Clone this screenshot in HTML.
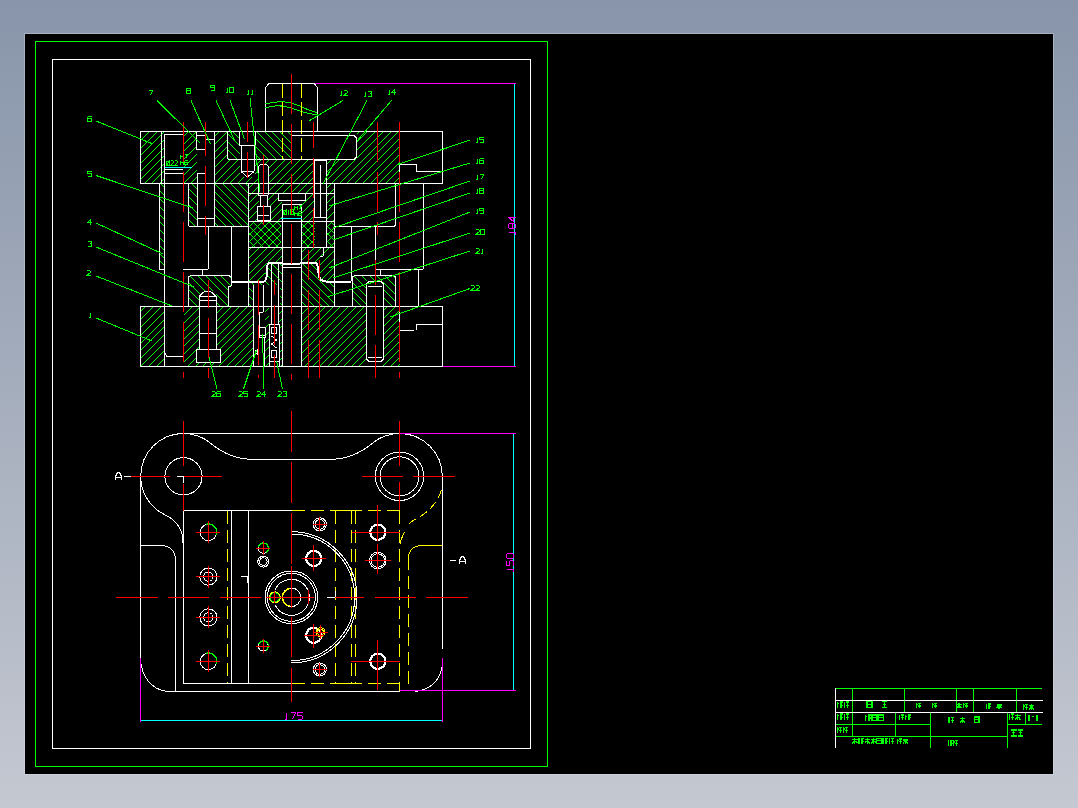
<!DOCTYPE html>
<html><head><meta charset="utf-8">
<style>
html,body{margin:0;padding:0;width:1078px;height:808px;overflow:hidden;}
body{background:linear-gradient(to bottom,#8895aa 0%,#c4c8d1 100%);position:relative;font-family:"Liberation Sans",sans-serif;}
#cad{position:absolute;left:25px;top:34px;width:1028px;height:740px;background:#000;box-shadow:0 0 0 1px rgba(220,225,235,0.35);}
svg{position:absolute;left:0;top:0;}
text{font-family:"Liberation Sans",sans-serif;}
</style></head><body>
<div id="cad"></div>
<svg width="1078" height="808" viewBox="0 0 1078 808" fill="none" stroke-width="1" shape-rendering="crispEdges">
<defs>
<pattern id="hs" shape-rendering="crispEdges" patternUnits="userSpaceOnUse" width="7.8" height="7.8"><path d="M-1,8.8 L8.8,-1 M-1,1 L1,-1 M6.8,8.8 L8.8,6.8" stroke="#00ff00" stroke-width="1"/></pattern>
<pattern id="hb" shape-rendering="crispEdges" patternUnits="userSpaceOnUse" width="7.8" height="7.8"><path d="M-1,-1 L8.8,8.8 M6.8,-1 L8.8,1 M-1,6.8 L1,8.8" stroke="#00ff00" stroke-width="1"/></pattern>
<pattern id="hx" shape-rendering="crispEdges" patternUnits="userSpaceOnUse" width="7.8" height="7.8"><path d="M-1,8.8 L8.8,-1 M-1,1 L1,-1 M6.8,8.8 L8.8,6.8 M-1,-1 L8.8,8.8 M6.8,-1 L8.8,1 M-1,6.8 L1,8.8" stroke="#00ff00" stroke-width="1"/></pattern>
</defs>
<g shape-rendering="crispEdges"><rect x="35.5" y="41.5" width="512" height="725" stroke="#00ff00" fill="none" rx="0" stroke-width="1"/><rect x="52.5" y="59.5" width="478" height="689" stroke="#ffffff" fill="none" rx="0" stroke-width="1"/></g><g shape-rendering="crispEdges"><line x1="835" y1="688.5" x2="1042" y2="688.5" stroke="#00ff00" stroke-width="1"/><line x1="852.5" y1="688" x2="852.5" y2="737" stroke="#00ff00" stroke-width="1"/><line x1="904.5" y1="688" x2="904.5" y2="712" stroke="#00ff00" stroke-width="1"/><line x1="956.5" y1="688" x2="956.5" y2="712" stroke="#00ff00" stroke-width="1"/><line x1="973.5" y1="688" x2="973.5" y2="712" stroke="#00ff00" stroke-width="1"/><line x1="1016.5" y1="688" x2="1016.5" y2="712" stroke="#00ff00" stroke-width="1"/><line x1="895.5" y1="712" x2="895.5" y2="737" stroke="#00ff00" stroke-width="1"/><line x1="930.5" y1="712" x2="930.5" y2="748" stroke="#00ff00" stroke-width="1"/><line x1="1007.5" y1="712" x2="1007.5" y2="748" stroke="#00ff00" stroke-width="1"/><line x1="1025.5" y1="712" x2="1025.5" y2="724" stroke="#00ff00" stroke-width="1"/><line x1="835" y1="724.5" x2="930" y2="724.5" stroke="#00ff00" stroke-width="1"/><line x1="1007" y1="724.5" x2="1042" y2="724.5" stroke="#00ff00" stroke-width="1"/><line x1="835" y1="736.5" x2="1007" y2="736.5" stroke="#00ff00" stroke-width="1"/><line x1="835.5" y1="688" x2="835.5" y2="748" stroke="#ffffff" stroke-width="1"/><line x1="835" y1="700.5" x2="1043" y2="700.5" stroke="#ffffff" stroke-width="1"/><line x1="835" y1="712.5" x2="1043" y2="712.5" stroke="#ffffff" stroke-width="1"/></g><path d="M837.0,703.8 H838.6 M837.8,701.5 V708.0 M839.5,702.0 H842.5 M840.9,701.5 V708.0 M839.5,705.4 H842.5 M843.5,703.8 H845.1 M844.3,701.5 V708.0 M846.0,702.0 H849.0 M847.4,701.5 V708.0 M846.0,705.4 H849.0" stroke="#00ff00" stroke-width="1.3" fill="none"/><path d="M867.0,701.5 H872.0 V707.5 H867.0 Z M867.0,704.2 H872.0" stroke="#00ff00" stroke-width="1.3" fill="none"/><path d="M881.5,701.5 H887.0 M882.6,704.2 H885.9 M881.5,707.5 H887.0 M884.2,701.0 V707.5" stroke="#00ff00" stroke-width="1.3" fill="none"/><path d="M916.0,704.8 H917.5 M916.8,703.0 V708.0 M918.2,703.5 H921.0 M919.5,703.0 V708.0 M918.2,706.0 H921.0" stroke="#00ff00" stroke-width="1.3" fill="none"/><path d="M932.0,704.8 H933.5 M932.8,703.0 V708.0 M934.2,703.5 H937.0 M935.5,703.0 V708.0 M934.2,706.0 H937.0" stroke="#00ff00" stroke-width="1.3" fill="none"/><path d="M956.5,704.5 H961.5 M959.0,703.0 V708.0 M956.5,708.0 L958.5,705.5 M961.5,708.0 L959.5,705.5" stroke="#00ff00" stroke-width="1.3" fill="none"/><path d="M963.0,704.8 H964.5 M963.8,703.0 V708.0 M965.2,703.5 H968.0 M966.5,703.0 V708.0 M965.2,706.0 H968.0" stroke="#00ff00" stroke-width="1.3" fill="none"/><path d="M985.5,705.2 H987.0 M986.2,703.5 V708.5 M987.8,704.0 H990.5 M989.0,703.5 V708.5 M987.8,706.5 H990.5" stroke="#00ff00" stroke-width="1.3" fill="none"/><path d="M996.5,705.0 H1001.5 M999.0,703.5 V708.5 M996.5,708.5 L998.5,706.0 M1001.5,708.5 L999.5,706.0" stroke="#00ff00" stroke-width="1.3" fill="none"/><path d="M1023.0,705.9 H1024.5 M1023.8,704.0 V709.5 M1025.2,704.5 H1028.0 M1026.5,704.0 V709.5 M1025.2,707.3 H1028.0 M1029.0,705.6 H1034.0 M1031.5,704.0 V709.5 M1029.0,709.5 L1031.0,706.8 M1034.0,709.5 L1032.0,706.8" stroke="#00ff00" stroke-width="1.3" fill="none"/><path d="M837.0,715.8 H838.6 M837.8,713.5 V720.0 M839.5,714.0 H842.5 M840.9,713.5 V720.0 M839.5,717.4 H842.5 M843.5,715.8 H845.1 M844.3,713.5 V720.0 M846.0,714.0 H849.0 M847.4,713.5 V720.0 M846.0,717.4 H849.0" stroke="#00ff00" stroke-width="1.3" fill="none"/><path d="M865.0,716.6 H866.6 M865.8,714.5 V720.5 M867.5,715.0 H870.5 M868.9,714.5 V720.5 M867.5,718.1 H870.5 M872.0,715.0 H877.0 V720.5 H872.0 Z M872.0,717.5 H877.0 M878.5,715.0 H883.5 V720.5 H878.5 Z M878.5,717.5 H883.5" stroke="#00ff00" stroke-width="1.3" fill="none"/><path d="M898.5,716.4 H900.1 M899.3,714.5 V720.0 M901.0,715.0 H904.0 M902.4,714.5 V720.0 M901.0,717.8 H904.0 M905.0,716.4 H906.6 M905.8,714.5 V720.0 M907.5,715.0 H910.5 M908.9,714.5 V720.0 M907.5,717.8 H910.5" stroke="#00ff00" stroke-width="1.3" fill="none"/><path d="M948.0,719.1 H949.8 M948.9,717.0 V723.0 M950.7,717.5 H954.0 M952.2,717.0 V723.0 M950.7,720.6 H954.0" stroke="#00ff00" stroke-width="1.3" fill="none"/><path d="M960.0,718.8 H965.0 M962.5,717.0 V723.0 M960.0,723.0 L962.0,720.0 M965.0,723.0 L963.0,720.0" stroke="#00ff00" stroke-width="1.3" fill="none"/><path d="M974.5,717.0 H979.0 V722.5 H974.5 Z M974.5,719.5 H979.0" stroke="#00ff00" stroke-width="1.3" fill="none"/><path d="M1008.5,715.8 H1010.1 M1009.3,713.5 V720.0 M1011.0,714.0 H1014.0 M1012.4,713.5 V720.0 M1011.0,717.4 H1014.0 M1015.0,715.5 H1020.5 M1017.8,713.5 V720.0 M1015.0,720.0 L1017.2,716.8 M1020.5,720.0 L1018.3,716.8" stroke="#00ff00" stroke-width="1.3" fill="none"/><path d="M1029,715 V720.5 M1028,720.5 H1030 M1033,716 V716.8 M1033,719.5 V720.3 M1037,715 V720.5" stroke="#00ff00" stroke-width="1.2"/><path d="M837.0,729.1 H838.5 M837.8,727.0 V733.0 M839.2,727.5 H842.0 M840.5,727.0 V733.0 M839.2,730.6 H842.0 M843.0,729.1 H844.5 M843.8,727.0 V733.0 M845.2,727.5 H848.0 M846.5,727.0 V733.0 M845.2,730.6 H848.0" stroke="#00ff00" stroke-width="1.3" fill="none"/><path d="M1011.0,730.0 H1016.5 M1012.1,732.8 H1015.4 M1011.0,736.0 H1016.5 M1013.8,729.5 V736.0 M1017.5,730.0 H1023.0 M1018.6,732.8 H1021.9 M1017.5,736.0 H1023.0 M1020.2,729.5 V736.0" stroke="#00ff00" stroke-width="1.3" fill="none"/><path d="M852.0,739.6 H857.5 M854.8,738.0 V743.5 M852.0,743.5 L854.2,740.8 M857.5,743.5 L855.3,740.8 M858.3,739.9 H859.9 M859.1,738.0 V743.5 M860.8,738.5 H863.8 M862.1,738.0 V743.5 M860.8,741.3 H863.8 M864.6,739.6 H870.1 M867.3,738.0 V743.5 M864.6,743.5 L866.8,740.8 M870.1,743.5 L867.9,740.8 M870.9,739.6 H876.4 M873.6,738.0 V743.5 M870.9,743.5 L873.1,740.8 M876.4,743.5 L874.2,740.8" stroke="#00ff00" stroke-width="1.3" fill="none"/><path d="M876.5,738.5 H881.5 V743.5 H876.5 Z M876.5,740.8 H881.5 M882.3,739.9 H883.9 M883.1,738.0 V743.5 M884.8,738.5 H887.8 M886.1,738.0 V743.5 M884.8,741.3 H887.8 M888.6,739.9 H890.2 M889.4,738.0 V743.5 M891.1,738.5 H894.1 M892.4,738.0 V743.5 M891.1,741.3 H894.1" stroke="#00ff00" stroke-width="1.3" fill="none"/><path d="M897.0,740.2 H898.5 M897.8,738.5 V743.5 M899.2,739.0 H902.0 M900.5,738.5 V743.5 M899.2,741.5 H902.0 M902.8,740.0 H907.8 M905.3,738.5 V743.5 M902.8,743.5 L904.8,741.0 M907.8,743.5 L905.8,741.0" stroke="#00ff00" stroke-width="1.3" fill="none"/><path d="M947.5,742.1 H949.0 M948.2,740.0 V746.0 M949.8,740.5 H952.5 M951.0,740.0 V746.0 M949.8,743.6 H952.5 M953.0,742.1 H954.5 M953.8,740.0 V746.0 M955.2,740.5 H958.0 M956.5,740.0 V746.0 M955.2,743.6 H958.0" stroke="#00ff00" stroke-width="1.3" fill="none"/><clipPath id="c1"><rect x="141" y="132" width="24" height="51"/></clipPath><path clip-path="url(#c1)" d="M89.00,184.00 L142.00,131.00 M97.00,184.00 L150.00,131.00 M105.00,184.00 L158.00,131.00 M112.00,184.00 L165.00,131.00 M120.00,184.00 L173.00,131.00 M128.00,184.00 L181.00,131.00 M136.00,184.00 L189.00,131.00 M144.00,184.00 L197.00,131.00 M151.00,184.00 L204.00,131.00 M159.00,184.00 L212.00,131.00 M167.00,184.00 L220.00,131.00" stroke="#00ff00" stroke-width="1" shape-rendering="crispEdges"/><clipPath id="c2"><rect x="184" y="132" width="216" height="51"/></clipPath><path clip-path="url(#c2)" d="M128.00,184.00 L181.00,131.00 M136.00,184.00 L189.00,131.00 M144.00,184.00 L197.00,131.00 M151.00,184.00 L204.00,131.00 M159.00,184.00 L212.00,131.00 M167.00,184.00 L220.00,131.00 M175.00,184.00 L228.00,131.00 M183.00,184.00 L236.00,131.00 M190.00,184.00 L243.00,131.00 M198.00,184.00 L251.00,131.00 M206.00,184.00 L259.00,131.00 M214.00,184.00 L267.00,131.00 M222.00,184.00 L275.00,131.00 M229.00,184.00 L282.00,131.00 M237.00,184.00 L290.00,131.00 M245.00,184.00 L298.00,131.00 M253.00,184.00 L306.00,131.00 M261.00,184.00 L314.00,131.00 M268.00,184.00 L321.00,131.00 M276.00,184.00 L329.00,131.00 M284.00,184.00 L337.00,131.00 M292.00,184.00 L345.00,131.00 M300.00,184.00 L353.00,131.00 M307.00,184.00 L360.00,131.00 M315.00,184.00 L368.00,131.00 M323.00,184.00 L376.00,131.00 M331.00,184.00 L384.00,131.00 M339.00,184.00 L392.00,131.00 M346.00,184.00 L399.00,131.00 M354.00,184.00 L407.00,131.00 M362.00,184.00 L415.00,131.00 M370.00,184.00 L423.00,131.00 M378.00,184.00 L431.00,131.00 M385.00,184.00 L438.00,131.00 M393.00,184.00 L446.00,131.00 M401.00,184.00 L454.00,131.00" stroke="#00ff00" stroke-width="1" shape-rendering="crispEdges"/><clipPath id="c3"><rect x="160" y="183" width="5" height="86"/></clipPath><path clip-path="url(#c3)" d="M73.00,182.00 L161.00,270.00 M81.00,182.00 L169.00,270.00 M88.00,182.00 L176.00,270.00 M96.00,182.00 L184.00,270.00 M104.00,182.00 L192.00,270.00 M112.00,182.00 L200.00,270.00 M120.00,182.00 L208.00,270.00 M127.00,182.00 L215.00,270.00 M135.00,182.00 L223.00,270.00 M143.00,182.00 L231.00,270.00 M151.00,182.00 L239.00,270.00 M159.00,182.00 L247.00,270.00 M166.00,182.00 L254.00,270.00" stroke="#00ff00" stroke-width="1" shape-rendering="crispEdges"/><clipPath id="c4"><rect x="249" y="183" width="85" height="38"/></clipPath><path clip-path="url(#c4)" d="M207.00,222.00 L247.00,182.00 M215.00,222.00 L255.00,182.00 M223.00,222.00 L263.00,182.00 M230.00,222.00 L270.00,182.00 M238.00,222.00 L278.00,182.00 M246.00,222.00 L286.00,182.00 M254.00,222.00 L294.00,182.00 M262.00,222.00 L302.00,182.00 M269.00,222.00 L309.00,182.00 M277.00,222.00 L317.00,182.00 M285.00,222.00 L325.00,182.00 M293.00,222.00 L333.00,182.00 M301.00,222.00 L341.00,182.00 M308.00,222.00 L348.00,182.00 M316.00,222.00 L356.00,182.00 M324.00,222.00 L364.00,182.00 M332.00,222.00 L372.00,182.00 M340.00,222.00 L380.00,182.00" stroke="#00ff00" stroke-width="1" shape-rendering="crispEdges"/><clipPath id="c5"><path d="M249,247 H282 V262 H267 L264,280 H249 Z"/></clipPath><path clip-path="url(#c5)" d="M210.00,281.00 L245.00,246.00 M218.00,281.00 L253.00,246.00 M226.00,281.00 L261.00,246.00 M234.00,281.00 L269.00,246.00 M242.00,281.00 L277.00,246.00 M249.00,281.00 L284.00,246.00 M257.00,281.00 L292.00,246.00 M265.00,281.00 L300.00,246.00 M273.00,281.00 L308.00,246.00 M281.00,281.00 L316.00,246.00 M288.00,281.00 L323.00,246.00" stroke="#00ff00" stroke-width="1" shape-rendering="crispEdges"/><clipPath id="c6"><path d="M249,280 H264 L267,262 H282 V306 H249 Z"/></clipPath><path clip-path="url(#c6)" d="M199.00,261.00 L245.00,307.00 M206.00,261.00 L252.00,307.00 M214.00,261.00 L260.00,307.00 M222.00,261.00 L268.00,307.00 M230.00,261.00 L276.00,307.00 M238.00,261.00 L284.00,307.00 M245.00,261.00 L291.00,307.00 M253.00,261.00 L299.00,307.00 M261.00,261.00 L307.00,307.00 M269.00,261.00 L315.00,307.00 M277.00,261.00 L323.00,307.00 M284.00,261.00 L330.00,307.00" stroke="#00ff00" stroke-width="1" shape-rendering="crispEdges"/><clipPath id="c7"><path d="M301,247 H334 V281 H320 L317,262 H301 Z"/></clipPath><path clip-path="url(#c7)" d="M264.00,282.00 L300.00,246.00 M272.00,282.00 L308.00,246.00 M280.00,282.00 L316.00,246.00 M287.00,282.00 L323.00,246.00 M295.00,282.00 L331.00,246.00 M303.00,282.00 L339.00,246.00 M311.00,282.00 L347.00,246.00 M319.00,282.00 L355.00,246.00 M326.00,282.00 L362.00,246.00 M334.00,282.00 L370.00,246.00" stroke="#00ff00" stroke-width="1" shape-rendering="crispEdges"/><clipPath id="c8"><path d="M301,262 H317 L320,281 H334 V306 H301 Z"/></clipPath><path clip-path="url(#c8)" d="M253.00,261.00 L299.00,307.00 M261.00,261.00 L307.00,307.00 M269.00,261.00 L315.00,307.00 M277.00,261.00 L323.00,307.00 M284.00,261.00 L330.00,307.00 M292.00,261.00 L338.00,307.00 M300.00,261.00 L346.00,307.00 M308.00,261.00 L354.00,307.00 M316.00,261.00 L362.00,307.00 M323.00,261.00 L369.00,307.00 M331.00,261.00 L377.00,307.00 M339.00,261.00 L385.00,307.00" stroke="#00ff00" stroke-width="1" shape-rendering="crispEdges"/><clipPath id="c9"><rect x="141" y="306" width="259" height="60"/></clipPath><path clip-path="url(#c9)" d="M78.00,367.00 L140.00,305.00 M85.00,367.00 L147.00,305.00 M93.00,367.00 L155.00,305.00 M101.00,367.00 L163.00,305.00 M109.00,367.00 L171.00,305.00 M117.00,367.00 L179.00,305.00 M124.00,367.00 L186.00,305.00 M132.00,367.00 L194.00,305.00 M140.00,367.00 L202.00,305.00 M148.00,367.00 L210.00,305.00 M156.00,367.00 L218.00,305.00 M163.00,367.00 L225.00,305.00 M171.00,367.00 L233.00,305.00 M179.00,367.00 L241.00,305.00 M187.00,367.00 L249.00,305.00 M195.00,367.00 L257.00,305.00 M202.00,367.00 L264.00,305.00 M210.00,367.00 L272.00,305.00 M218.00,367.00 L280.00,305.00 M226.00,367.00 L288.00,305.00 M234.00,367.00 L296.00,305.00 M241.00,367.00 L303.00,305.00 M249.00,367.00 L311.00,305.00 M257.00,367.00 L319.00,305.00 M265.00,367.00 L327.00,305.00 M273.00,367.00 L335.00,305.00 M280.00,367.00 L342.00,305.00 M288.00,367.00 L350.00,305.00 M296.00,367.00 L358.00,305.00 M304.00,367.00 L366.00,305.00 M312.00,367.00 L374.00,305.00 M319.00,367.00 L381.00,305.00 M327.00,367.00 L389.00,305.00 M335.00,367.00 L397.00,305.00 M343.00,367.00 L405.00,305.00 M351.00,367.00 L413.00,305.00 M358.00,367.00 L420.00,305.00 M366.00,367.00 L428.00,305.00 M374.00,367.00 L436.00,305.00 M382.00,367.00 L444.00,305.00 M390.00,367.00 L452.00,305.00 M397.00,367.00 L459.00,305.00 M405.00,367.00 L467.00,305.00" stroke="#00ff00" stroke-width="1" shape-rendering="crispEdges"/><rect x="228" y="132" width="64" height="27" fill="#000" stroke="none"/><clipPath id="c10"><rect x="228" y="132" width="64" height="27"/></clipPath><path clip-path="url(#c10)" d="M193.00,131.00 L222.00,160.00 M201.00,131.00 L230.00,160.00 M209.00,131.00 L238.00,160.00 M217.00,131.00 L246.00,160.00 M225.00,131.00 L254.00,160.00 M232.00,131.00 L261.00,160.00 M240.00,131.00 L269.00,160.00 M248.00,131.00 L277.00,160.00 M256.00,131.00 L285.00,160.00 M264.00,131.00 L293.00,160.00 M271.00,131.00 L300.00,160.00 M279.00,131.00 L308.00,160.00 M287.00,131.00 L316.00,160.00 M295.00,131.00 L324.00,160.00" stroke="#00ff00" stroke-width="1" shape-rendering="crispEdges"/><clipPath id="c11"><rect x="189" y="183" width="60" height="43"/></clipPath><path clip-path="url(#c11)" d="M143.00,182.00 L188.00,227.00 M151.00,182.00 L196.00,227.00 M159.00,182.00 L204.00,227.00 M166.00,182.00 L211.00,227.00 M174.00,182.00 L219.00,227.00 M182.00,182.00 L227.00,227.00 M190.00,182.00 L235.00,227.00 M198.00,182.00 L243.00,227.00 M205.00,182.00 L250.00,227.00 M213.00,182.00 L258.00,227.00 M221.00,182.00 L266.00,227.00 M229.00,182.00 L274.00,227.00 M237.00,182.00 L282.00,227.00 M244.00,182.00 L289.00,227.00 M252.00,182.00 L297.00,227.00" stroke="#00ff00" stroke-width="1" shape-rendering="crispEdges"/><clipPath id="c12"><path d="M189,276 H231 V286 H228 V306 H189 Z"/></clipPath><path clip-path="url(#c12)" d="M158.00,275.00 L190.00,307.00 M166.00,275.00 L198.00,307.00 M174.00,275.00 L206.00,307.00 M181.00,275.00 L213.00,307.00 M189.00,275.00 L221.00,307.00 M197.00,275.00 L229.00,307.00 M205.00,275.00 L237.00,307.00 M213.00,275.00 L245.00,307.00 M220.00,275.00 L252.00,307.00 M228.00,275.00 L260.00,307.00 M236.00,275.00 L268.00,307.00" stroke="#00ff00" stroke-width="1" shape-rendering="crispEdges"/><clipPath id="c13"><rect x="352" y="276" width="44" height="30"/></clipPath><path clip-path="url(#c13)" d="M314.00,275.00 L346.00,307.00 M322.00,275.00 L354.00,307.00 M330.00,275.00 L362.00,307.00 M337.00,275.00 L369.00,307.00 M345.00,275.00 L377.00,307.00 M353.00,275.00 L385.00,307.00 M361.00,275.00 L393.00,307.00 M369.00,275.00 L401.00,307.00 M376.00,275.00 L408.00,307.00 M384.00,275.00 L416.00,307.00 M392.00,275.00 L424.00,307.00 M400.00,275.00 L432.00,307.00" stroke="#00ff00" stroke-width="1" shape-rendering="crispEdges"/><clipPath id="c14"><rect x="249" y="221" width="32" height="26"/></clipPath><path clip-path="url(#c14)" d="M220.00,248.00 L248.00,220.00 M228.00,248.00 L256.00,220.00 M236.00,248.00 L264.00,220.00 M243.00,248.00 L271.00,220.00 M251.00,248.00 L279.00,220.00 M259.00,248.00 L287.00,220.00 M267.00,248.00 L295.00,220.00 M275.00,248.00 L303.00,220.00 M282.00,248.00 L310.00,220.00 M220.00,220.00 L248.00,248.00 M228.00,220.00 L256.00,248.00 M236.00,220.00 L264.00,248.00 M243.00,220.00 L271.00,248.00 M251.00,220.00 L279.00,248.00 M259.00,220.00 L287.00,248.00 M267.00,220.00 L295.00,248.00 M275.00,220.00 L303.00,248.00 M282.00,220.00 L310.00,248.00" stroke="#00ff00" stroke-width="1" shape-rendering="crispEdges"/><clipPath id="c15"><rect x="301" y="221" width="33" height="26"/></clipPath><path clip-path="url(#c15)" d="M267.00,248.00 L295.00,220.00 M275.00,248.00 L303.00,220.00 M282.00,248.00 L310.00,220.00 M290.00,248.00 L318.00,220.00 M298.00,248.00 L326.00,220.00 M306.00,248.00 L334.00,220.00 M314.00,248.00 L342.00,220.00 M321.00,248.00 L349.00,220.00 M329.00,248.00 L357.00,220.00 M337.00,248.00 L365.00,220.00 M267.00,220.00 L295.00,248.00 M275.00,220.00 L303.00,248.00 M282.00,220.00 L310.00,248.00 M290.00,220.00 L318.00,248.00 M298.00,220.00 L326.00,248.00 M306.00,220.00 L334.00,248.00 M314.00,220.00 L342.00,248.00 M321.00,220.00 L349.00,248.00 M329.00,220.00 L357.00,248.00 M337.00,220.00 L365.00,248.00" stroke="#00ff00" stroke-width="1" shape-rendering="crispEdges"/><rect x="165" y="134" width="19" height="49" fill="#000000" stroke="none"/><rect x="197" y="132" width="17" height="94" fill="#000000" stroke="none"/><rect x="292" y="132" width="65" height="27" fill="#000000" stroke="none"/><rect x="240" y="132" width="15" height="45" fill="#000000" stroke="none"/><rect x="259" y="165" width="9" height="56" fill="#000000" stroke="none"/><rect x="258" y="206" width="12" height="15" fill="#000000" stroke="none"/><rect x="282" y="193" width="20" height="174" fill="#000000" stroke="none"/><rect x="279" y="193" width="26" height="8" fill="#000000" stroke="none"/><rect x="315" y="161" width="11" height="86" fill="#000000" stroke="none"/><rect x="165" y="306" width="19" height="60" fill="#000000" stroke="none"/><rect x="200" y="291" width="16" height="71" fill="#000000" stroke="none"/><rect x="197" y="349" width="23" height="13" fill="#000000" stroke="none"/><rect x="254" y="285" width="26" height="81" fill="#000000" stroke="none"/><rect x="367" y="281" width="16" height="25" fill="#000000" stroke="none"/><rect x="367" y="306" width="16" height="60" fill="#000000" stroke="none"/><rect x="400" y="131" width="42" height="52" fill="#000000" stroke="none"/><rect x="400" y="306" width="42" height="60" fill="#000000" stroke="none"/><rect x="335" y="183" width="65" height="93" fill="#000000" stroke="none"/><rect x="396" y="183" width="28" height="93" fill="#000000" stroke="none"/><clipPath id="c16"><rect x="326" y="183" width="8" height="38"/></clipPath><path clip-path="url(#c16)" d="M285.00,222.00 L325.00,182.00 M293.00,222.00 L333.00,182.00 M301.00,222.00 L341.00,182.00 M308.00,222.00 L348.00,182.00 M316.00,222.00 L356.00,182.00 M324.00,222.00 L364.00,182.00 M332.00,222.00 L372.00,182.00 M340.00,222.00 L380.00,182.00" stroke="#00ff00" stroke-width="1" shape-rendering="crispEdges"/><clipPath id="c17"><rect x="265" y="306" width="4" height="60"/></clipPath><path clip-path="url(#c17)" d="M202.00,367.00 L264.00,305.00 M210.00,367.00 L272.00,305.00 M218.00,367.00 L280.00,305.00 M226.00,367.00 L288.00,305.00 M234.00,367.00 L296.00,305.00 M241.00,367.00 L303.00,305.00 M249.00,367.00 L311.00,305.00 M257.00,367.00 L319.00,305.00 M265.00,367.00 L327.00,305.00 M273.00,367.00 L335.00,305.00" stroke="#00ff00" stroke-width="1" shape-rendering="crispEdges"/><clipPath id="c18"><rect x="279" y="306" width="3" height="60"/></clipPath><path clip-path="url(#c18)" d="M218.00,367.00 L280.00,305.00 M226.00,367.00 L288.00,305.00 M234.00,367.00 L296.00,305.00 M241.00,367.00 L303.00,305.00 M249.00,367.00 L311.00,305.00 M257.00,367.00 L319.00,305.00 M265.00,367.00 L327.00,305.00 M273.00,367.00 L335.00,305.00 M280.00,367.00 L342.00,305.00 M288.00,367.00 L350.00,305.00" stroke="#00ff00" stroke-width="1" shape-rendering="crispEdges"/><path d="M265.5,131 V87.5 L269,83.5 H314 L317.5,87.5 V131" stroke="#ffffff" stroke-width="1" fill="none"/><path d="M265.5,104 C275,101 288,101 300,106 C306,109 312,112 317.5,112.5" stroke="#00ff00" stroke-width="1" fill="none"/><path d="M265.5,108 C272,105.5 282,104.5 294,109 C302,112 310,114.5 317.5,114.5" stroke="#00ff00" stroke-width="1" fill="none"/><line x1="282.5" y1="84" x2="282.5" y2="159" stroke="#ffff00" stroke-width="1" stroke-dasharray="14 4"/><line x1="301.5" y1="84" x2="301.5" y2="159" stroke="#ffff00" stroke-width="1" stroke-dasharray="14 4"/><g shape-rendering="crispEdges"><line x1="140" y1="131.5" x2="443" y2="131.5" stroke="#ffffff" stroke-width="1"/><line x1="140.5" y1="131" x2="140.5" y2="183" stroke="#ffffff" stroke-width="1"/><line x1="442.5" y1="131" x2="442.5" y2="183" stroke="#ffffff" stroke-width="1"/><line x1="140" y1="183.5" x2="443" y2="183.5" stroke="#ffffff" stroke-width="1"/><line x1="161.5" y1="131" x2="161.5" y2="183" stroke="#ffffff" stroke-width="1"/><line x1="164.5" y1="134" x2="164.5" y2="366" stroke="#ffffff" stroke-width="1"/><line x1="165" y1="134.5" x2="183" y2="134.5" stroke="#ffffff" stroke-width="1"/><line x1="165" y1="169.5" x2="183" y2="169.5" stroke="#ffffff" stroke-width="1"/><line x1="165" y1="173.5" x2="183" y2="173.5" stroke="#ffffff" stroke-width="1"/><line x1="196.5" y1="131" x2="196.5" y2="149" stroke="#ffffff" stroke-width="1"/><line x1="196" y1="149.5" x2="206" y2="149.5" stroke="#ffffff" stroke-width="1"/><line x1="197.5" y1="173" x2="197.5" y2="226" stroke="#ffffff" stroke-width="1"/><line x1="197" y1="173.5" x2="206" y2="173.5" stroke="#ffffff" stroke-width="1"/><line x1="214.5" y1="131" x2="214.5" y2="226" stroke="#ffffff" stroke-width="1"/><line x1="197" y1="135.5" x2="206" y2="135.5" stroke="#ffffff" stroke-width="1"/><line x1="206" y1="139.5" x2="214" y2="139.5" stroke="#ffffff" stroke-width="1"/><line x1="197" y1="218.5" x2="214" y2="218.5" stroke="#ffffff" stroke-width="1"/><line x1="227.5" y1="131" x2="227.5" y2="159" stroke="#ffffff" stroke-width="1"/><line x1="228" y1="159.5" x2="354" y2="159.5" stroke="#ffffff" stroke-width="1"/><line x1="291.5" y1="135" x2="291.5" y2="159" stroke="#ffffff" stroke-width="1"/><line x1="291" y1="135.5" x2="354" y2="135.5" stroke="#ffffff" stroke-width="1"/><line x1="356.5" y1="138" x2="356.5" y2="157" stroke="#ffffff" stroke-width="1"/><rect x="239.5" y="131.5" width="16" height="14" stroke="#ffffff" fill="none" rx="0" stroke-width="1"/><line x1="241.5" y1="145" x2="241.5" y2="171" stroke="#ffffff" stroke-width="1"/><line x1="254.5" y1="145" x2="254.5" y2="171" stroke="#ffffff" stroke-width="1"/><line x1="241" y1="171.5" x2="254" y2="171.5" stroke="#ffffff" stroke-width="1"/><line x1="258.5" y1="166" x2="258.5" y2="195" stroke="#ffffff" stroke-width="1"/><line x1="268.5" y1="166" x2="268.5" y2="195" stroke="#ffffff" stroke-width="1"/><line x1="258" y1="195.5" x2="268" y2="195.5" stroke="#ffffff" stroke-width="1"/><line x1="260.5" y1="195" x2="260.5" y2="206" stroke="#ffffff" stroke-width="1"/><line x1="267.5" y1="195" x2="267.5" y2="206" stroke="#ffffff" stroke-width="1"/><rect x="257.5" y="206.5" width="13" height="14" stroke="#ffffff" fill="none" rx="0" stroke-width="1"/><line x1="258" y1="215.5" x2="269" y2="215.5" stroke="#ffffff" stroke-width="1"/><line x1="399" y1="164.5" x2="416" y2="164.5" stroke="#ffffff" stroke-width="1"/><line x1="416.5" y1="164" x2="416.5" y2="171" stroke="#ffffff" stroke-width="1"/><line x1="416" y1="171.5" x2="443" y2="171.5" stroke="#ffffff" stroke-width="1"/><line x1="399.5" y1="164" x2="399.5" y2="183" stroke="#ffffff" stroke-width="1"/><line x1="249" y1="193.5" x2="334" y2="193.5" stroke="#ffffff" stroke-width="1"/><line x1="248.5" y1="183" x2="248.5" y2="306" stroke="#ffffff" stroke-width="1"/><line x1="189" y1="226.5" x2="249" y2="226.5" stroke="#ffffff" stroke-width="1"/><line x1="188.5" y1="183" x2="188.5" y2="226" stroke="#ffffff" stroke-width="1"/><line x1="208.5" y1="226" x2="208.5" y2="269" stroke="#ffffff" stroke-width="1"/><line x1="183" y1="269.5" x2="208" y2="269.5" stroke="#ffffff" stroke-width="1"/><line x1="202.5" y1="269" x2="202.5" y2="275" stroke="#ffffff" stroke-width="1"/><line x1="231.5" y1="226" x2="231.5" y2="281" stroke="#ffffff" stroke-width="1"/><line x1="249" y1="221.5" x2="334" y2="221.5" stroke="#ffffff" stroke-width="1"/><line x1="249" y1="247.5" x2="334" y2="247.5" stroke="#ffffff" stroke-width="1"/><line x1="282.5" y1="204" x2="282.5" y2="366" stroke="#ffffff" stroke-width="1"/><line x1="301.5" y1="204" x2="301.5" y2="366" stroke="#ffffff" stroke-width="1"/><rect x="278.5" y="193.5" width="27" height="7" stroke="#ffffff" fill="none" rx="0" stroke-width="1"/><line x1="282" y1="204.5" x2="302" y2="204.5" stroke="#ffffff" stroke-width="1"/><line x1="282" y1="218.5" x2="302" y2="218.5" stroke="#ffffff" stroke-width="1"/><rect x="314.5" y="160.5" width="12" height="57" stroke="#ffffff" fill="none" rx="0" stroke-width="1"/><line x1="320.5" y1="165" x2="320.5" y2="217" stroke="#ffffff" stroke-width="1"/><line x1="326.5" y1="183" x2="326.5" y2="247" stroke="#ffffff" stroke-width="1"/><line x1="334.5" y1="183" x2="334.5" y2="306" stroke="#ffffff" stroke-width="1"/><line x1="159.5" y1="183" x2="159.5" y2="269" stroke="#ffffff" stroke-width="1"/><line x1="159" y1="269.5" x2="164" y2="269.5" stroke="#ffffff" stroke-width="1"/><line x1="423.5" y1="183" x2="423.5" y2="269" stroke="#ffffff" stroke-width="1"/><line x1="375" y1="269.5" x2="423" y2="269.5" stroke="#ffffff" stroke-width="1"/><line x1="375.5" y1="226" x2="375.5" y2="269" stroke="#ffffff" stroke-width="1"/><line x1="351.5" y1="226" x2="351.5" y2="281" stroke="#ffffff" stroke-width="1"/><line x1="380.5" y1="269" x2="380.5" y2="276" stroke="#ffffff" stroke-width="1"/><line x1="418.5" y1="269" x2="418.5" y2="306" stroke="#ffffff" stroke-width="1"/><line x1="334" y1="226.5" x2="393" y2="226.5" stroke="#ffffff" stroke-width="1"/><line x1="395.5" y1="183" x2="395.5" y2="224" stroke="#ffffff" stroke-width="1"/><path d="M393,226.5 Q395.5,226.5 395.5,224" stroke="#ffffff" stroke-width="1" fill="none"/><line x1="354" y1="275.5" x2="394" y2="275.5" stroke="#ffffff" stroke-width="1"/><line x1="352.5" y1="277" x2="352.5" y2="306" stroke="#ffffff" stroke-width="1"/><line x1="395.5" y1="277" x2="395.5" y2="306" stroke="#ffffff" stroke-width="1"/><line x1="366.5" y1="284" x2="366.5" y2="359" stroke="#ffffff" stroke-width="1"/><line x1="383.5" y1="284" x2="383.5" y2="359" stroke="#ffffff" stroke-width="1"/><line x1="368" y1="286.5" x2="382" y2="286.5" stroke="#ffffff" stroke-width="1"/><line x1="368" y1="357.5" x2="382" y2="357.5" stroke="#ffffff" stroke-width="1"/><line x1="323.5" y1="247" x2="323.5" y2="256" stroke="#ffffff" stroke-width="1"/><line x1="320" y1="256.5" x2="323" y2="256.5" stroke="#ffffff" stroke-width="1"/><line x1="282" y1="267.5" x2="301" y2="267.5" stroke="#ffffff" stroke-width="1"/><line x1="190" y1="275.5" x2="229" y2="275.5" stroke="#ffffff" stroke-width="1"/><line x1="188.5" y1="277" x2="188.5" y2="306" stroke="#ffffff" stroke-width="1"/><line x1="231.5" y1="277" x2="231.5" y2="286" stroke="#ffffff" stroke-width="1"/><line x1="228" y1="286.5" x2="231" y2="286.5" stroke="#ffffff" stroke-width="1"/><line x1="228.5" y1="286" x2="228.5" y2="306" stroke="#ffffff" stroke-width="1"/><line x1="140" y1="306.5" x2="443" y2="306.5" stroke="#ffffff" stroke-width="1"/><line x1="140" y1="366.5" x2="443" y2="366.5" stroke="#ffffff" stroke-width="1"/><line x1="140.5" y1="306" x2="140.5" y2="366" stroke="#ffffff" stroke-width="1"/><line x1="442.5" y1="306" x2="442.5" y2="366" stroke="#ffffff" stroke-width="1"/><line x1="399.5" y1="306" x2="399.5" y2="328" stroke="#ffffff" stroke-width="1"/><line x1="400" y1="330.5" x2="414" y2="330.5" stroke="#ffffff" stroke-width="1"/><line x1="416.5" y1="324" x2="416.5" y2="330" stroke="#ffffff" stroke-width="1"/><line x1="416" y1="324.5" x2="443" y2="324.5" stroke="#ffffff" stroke-width="1"/><line x1="166" y1="356.5" x2="183" y2="356.5" stroke="#ffffff" stroke-width="1"/><line x1="164.5" y1="352" x2="167" y2="356.5" stroke="#ffffff" stroke-width="1"/><line x1="199.5" y1="296" x2="199.5" y2="349" stroke="#ffffff" stroke-width="1"/><line x1="216.5" y1="296" x2="216.5" y2="349" stroke="#ffffff" stroke-width="1"/><rect x="196.5" y="349.5" width="24" height="13" stroke="#ffffff" fill="none" rx="0" stroke-width="1"/><line x1="200" y1="296.5" x2="216" y2="296.5" stroke="#ffffff" stroke-width="1"/><line x1="200" y1="300.5" x2="216" y2="300.5" stroke="#ffffff" stroke-width="1"/><line x1="200" y1="333.5" x2="216" y2="333.5" stroke="#ffffff" stroke-width="1"/><line x1="253.5" y1="285" x2="253.5" y2="366" stroke="#ffffff" stroke-width="1"/><line x1="263.5" y1="285" x2="263.5" y2="312" stroke="#ffffff" stroke-width="1"/><line x1="259" y1="312.5" x2="263" y2="312.5" stroke="#ffffff" stroke-width="1"/><line x1="259.5" y1="312" x2="259.5" y2="338" stroke="#ffffff" stroke-width="1"/><rect x="259.5" y="327.5" width="6" height="10" stroke="#ffffff" fill="none" rx="0" stroke-width="1"/><line x1="259" y1="335.5" x2="265" y2="335.5" stroke="#ffffff" stroke-width="1"/><line x1="264.5" y1="338" x2="264.5" y2="366" stroke="#ffffff" stroke-width="1"/><rect x="269.5" y="324.5" width="10" height="42" stroke="#ffffff" fill="none" rx="0" stroke-width="1"/><line x1="271.5" y1="263" x2="271.5" y2="324" stroke="#ffffff" stroke-width="1"/><line x1="278.5" y1="263" x2="278.5" y2="324" stroke="#ffffff" stroke-width="1"/><line x1="255" y1="350.5" x2="259" y2="350.5" stroke="#ffffff" stroke-width="1"/><line x1="255" y1="353.5" x2="259" y2="353.5" stroke="#ffffff" stroke-width="1"/><line x1="257.5" y1="349" x2="257.5" y2="355" stroke="#ffffff" stroke-width="1"/></g><path d="M231,281.5 H264 Q266.5,281 267,272 L267.5,265 Q268,262.5 271,262.5 H282" stroke="#ffffff" stroke-width="2" fill="none"/><path d="M300,262.5 H314 Q317,262.5 317.5,266 L319,276 Q320,281 326,281.5 H351" stroke="#ffffff" stroke-width="2" fill="none"/><line x1="282" y1="263.5" x2="300" y2="263.5" stroke="#ffffff" stroke-width="2"/><path d="M366.5,284 L369,281.5 H381 L383.5,284 M366.5,359 L369,361.5 H381 L383.5,359" stroke="#ffffff" stroke-width="1" fill="none"/><path d="M352.5,277 L354.5,275.5 M394,275.5 L395.5,277 M188.5,277 L190.5,275.5 M229,275.5 L231.5,277.5" stroke="#ffffff" stroke-width="1" fill="none"/><path d="M199.5,296 L203,292.5 Q207.5,290 212,292.5 L215.5,296" stroke="#ffffff" stroke-width="1" fill="none"/><path d="M241,171.5 L247.5,177 L254,171.5" stroke="#ffffff" stroke-width="1" fill="none"/><path d="M354,135.5 L356.5,138 M354,159.5 L356.5,157" stroke="#ffffff" stroke-width="1" fill="none"/><path d="M258.5,168 Q259,164 263.5,164 Q268,164 268.5,168" stroke="#ffffff" stroke-width="1" fill="none"/><path d="M271.5,327.5 H276.5 V333.5 H271.5 Z M271.5,336 L276.5,340 L271.5,344 L276.5,348 M271.5,350.5 H276.5 V357.5 H271.5 Z M270,361.5 H279" stroke="#ffffff" stroke-width="1" fill="none"/><line x1="165" y1="167.5" x2="192" y2="167.5" stroke="#00ffff" stroke-width="1"/><path d="M166.5,161.5 L169.5,161.5 L169.5,161.5 L169.5,165.5 L169.5,165.5 L166.5,165.5 L166.5,165.5 L166.5,161.5 Z M166.5,165.5 L169.5,160.5 M170.5,161.5 L171.5,160.5 L172.5,160.5 L173.5,161.5 L173.5,162.5 L170.5,165.5 L173.5,165.5 M174.5,161.5 L175.5,160.5 L176.5,160.5 L177.5,161.5 L177.5,162.5 L174.5,165.5 L177.5,165.5" stroke="#00ff00" stroke-width="1" fill="none" shape-rendering="crispEdges"/><path d="M180.5,154.5 L180.5,158.5 M183.5,154.5 L183.5,158.5 M180.5,156.5 L183.5,156.5 M184.5,154.5 L187.5,154.5 L185.5,158.5" stroke="#00ff00" stroke-width="1" fill="none" shape-rendering="crispEdges"/><path d="M180.5,160.5 L180.5,164.5 M180.5,162.5 L183.5,162.5 L183.5,162.5 L183.5,164.5 M187.5,160.5 L185.5,160.5 L184.5,161.5 L184.5,164.5 L184.5,164.5 L187.5,164.5 L187.5,164.5 L187.5,162.5 L187.5,162.5 L184.5,162.5" stroke="#00ff00" stroke-width="1" fill="none" shape-rendering="crispEdges"/><line x1="281" y1="218.5" x2="302" y2="218.5" stroke="#00ffff" stroke-width="1"/><path d="M283.5,210.5 L286.5,210.5 L286.5,210.5 L286.5,214.5 L286.5,214.5 L283.5,214.5 L283.5,214.5 L283.5,210.5 Z M283.5,214.5 L286.5,209.5 M288.5,209.5 L288.5,214.5 L287.5,214.5 M290.5,209.5 L293.5,209.5 L293.5,209.5 L293.5,211.5 L293.5,211.5 L290.5,211.5 L290.5,211.5 L290.5,209.5 Z M290.5,211.5 L290.5,212.5 L290.5,214.5 L290.5,214.5 L293.5,214.5 L293.5,214.5 L293.5,212.5 L293.5,211.5" stroke="#00ff00" stroke-width="1" fill="none" shape-rendering="crispEdges"/><path d="M294.5,205.5 L294.5,209.5 M297.5,205.5 L297.5,209.5 M294.5,207.5 L297.5,207.5 M298.5,205.5 L301.5,205.5 L299.5,209.5" stroke="#00ff00" stroke-width="1" fill="none" shape-rendering="crispEdges"/><path d="M294.5,211.5 L294.5,215.5 M294.5,213.5 L297.5,213.5 L297.5,213.5 L297.5,215.5 M301.5,211.5 L299.5,211.5 L298.5,212.5 L298.5,215.5 L298.5,215.5 L301.5,215.5 L301.5,215.5 L301.5,213.5 L301.5,213.5 L298.5,213.5" stroke="#00ff00" stroke-width="1" fill="none" shape-rendering="crispEdges"/><line x1="183.5" y1="122" x2="183.5" y2="378" stroke="#ff0000" stroke-width="1" stroke-dasharray="40 10" stroke-dashoffset="0"/><line x1="205.5" y1="122" x2="205.5" y2="235" stroke="#ff0000" stroke-width="1" stroke-dasharray="40 10" stroke-dashoffset="6"/><line x1="247.5" y1="122" x2="247.5" y2="178" stroke="#ff0000" stroke-width="1" stroke-dasharray="40 10" stroke-dashoffset="20"/><line x1="263.5" y1="155" x2="263.5" y2="225" stroke="#ff0000" stroke-width="1" stroke-dasharray="40 10" stroke-dashoffset="0"/><line x1="291.5" y1="74" x2="291.5" y2="380" stroke="#ff0000" stroke-width="1" stroke-dasharray="40 10" stroke-dashoffset="0"/><line x1="308.5" y1="250" x2="308.5" y2="378" stroke="#ff0000" stroke-width="1" stroke-dasharray="40 10" stroke-dashoffset="10"/><line x1="313.5" y1="122" x2="313.5" y2="250" stroke="#ff0000" stroke-width="1" stroke-dasharray="40 10" stroke-dashoffset="14"/><line x1="319.5" y1="260" x2="319.5" y2="378" stroke="#ff0000" stroke-width="1" stroke-dasharray="40 10" stroke-dashoffset="20"/><line x1="377.5" y1="122" x2="377.5" y2="235" stroke="#ff0000" stroke-width="1" stroke-dasharray="40 10" stroke-dashoffset="0"/><line x1="375.5" y1="260" x2="375.5" y2="378" stroke="#ff0000" stroke-width="1" stroke-dasharray="40 10" stroke-dashoffset="15"/><line x1="399.5" y1="122" x2="399.5" y2="378" stroke="#ff0000" stroke-width="1" stroke-dasharray="40 10" stroke-dashoffset="0"/><line x1="258.5" y1="280" x2="258.5" y2="378" stroke="#ff0000" stroke-width="1" stroke-dasharray="40 10" stroke-dashoffset="5"/><line x1="274.5" y1="280" x2="274.5" y2="378" stroke="#ff0000" stroke-width="1" stroke-dasharray="40 10" stroke-dashoffset="25"/><line x1="208.5" y1="280" x2="208.5" y2="378" stroke="#ff0000" stroke-width="1" stroke-dasharray="40 10" stroke-dashoffset="12"/><line x1="96" y1="318" x2="152" y2="341" stroke="#00ff00" stroke-width="1"/><path d="M90.5,312.5 L90.5,317.5 L88.5,317.5" stroke="#00ff00" stroke-width="1" fill="none" shape-rendering="crispEdges"/><line x1="96" y1="276" x2="172" y2="306" stroke="#00ff00" stroke-width="1"/><path d="M86.5,271.5 L87.5,270.5 L89.5,270.5 L90.5,271.5 L90.5,272.5 L86.5,275.5 L90.5,275.5" stroke="#00ff00" stroke-width="1" fill="none" shape-rendering="crispEdges"/><line x1="96" y1="247" x2="194" y2="287" stroke="#00ff00" stroke-width="1"/><path d="M87.5,241.5 L87.5,241.5 L91.5,241.5 L91.5,241.5 L91.5,243.5 L91.5,243.5 L89.5,243.5 M91.5,243.5 L91.5,244.5 L91.5,246.5 L91.5,246.5 L87.5,246.5 L87.5,246.5" stroke="#00ff00" stroke-width="1" fill="none" shape-rendering="crispEdges"/><line x1="96" y1="223" x2="163" y2="254" stroke="#00ff00" stroke-width="1"/><path d="M90.5,224.5 L90.5,219.5 L87.5,222.5 L91.5,222.5" stroke="#00ff00" stroke-width="1" fill="none" shape-rendering="crispEdges"/><line x1="96" y1="175.5" x2="193" y2="208" stroke="#00ff00" stroke-width="1"/><path d="M91.5,171.5 L87.5,171.5 L87.5,173.5 L91.5,173.5 L91.5,173.5 L91.5,176.5 L91.5,176.5 L87.5,176.5" stroke="#00ff00" stroke-width="1" fill="none" shape-rendering="crispEdges"/><line x1="96" y1="121" x2="153" y2="144" stroke="#00ff00" stroke-width="1"/><path d="M91.5,116.5 L88.5,116.5 L87.5,117.5 L87.5,121.5 L87.5,121.5 L91.5,121.5 L91.5,121.5 L91.5,118.5 L91.5,118.5 L87.5,118.5" stroke="#00ff00" stroke-width="1" fill="none" shape-rendering="crispEdges"/><line x1="157" y1="100.5" x2="200" y2="143" stroke="#00ff00" stroke-width="1"/><path d="M148.5,90.5 L152.5,90.5 L150.5,95.5" stroke="#00ff00" stroke-width="1" fill="none" shape-rendering="crispEdges"/><line x1="191" y1="100.5" x2="210.5" y2="144" stroke="#00ff00" stroke-width="1"/><path d="M186.5,88.5 L190.5,88.5 L190.5,88.5 L190.5,90.5 L190.5,90.5 L186.5,90.5 L186.5,90.5 L186.5,88.5 Z M186.5,90.5 L186.5,91.5 L186.5,93.5 L186.5,93.5 L190.5,93.5 L190.5,93.5 L190.5,91.5 L190.5,90.5" stroke="#00ff00" stroke-width="1" fill="none" shape-rendering="crispEdges"/><line x1="216" y1="100.5" x2="234.5" y2="140" stroke="#00ff00" stroke-width="1"/><path d="M214.5,87.5 L210.5,87.5 L210.5,87.5 L210.5,85.5 L210.5,85.5 L214.5,85.5 L214.5,85.5 L214.5,90.5 L214.5,90.5 L210.5,90.5" stroke="#00ff00" stroke-width="1" fill="none" shape-rendering="crispEdges"/><line x1="230" y1="100.5" x2="244.5" y2="139" stroke="#00ff00" stroke-width="1"/><path d="M227.5,87.5 L227.5,92.5 L225.5,92.5 M229.5,87.5 L233.5,87.5 L233.5,87.5 L233.5,92.5 L233.5,92.5 L229.5,92.5 L229.5,92.5 L229.5,87.5 Z" stroke="#00ff00" stroke-width="1" fill="none" shape-rendering="crispEdges"/><line x1="250" y1="98" x2="260" y2="192" stroke="#00ff00" stroke-width="1"/><path d="M248.5,89.5 L248.5,94.5 L246.5,94.5 M252.5,89.5 L252.5,94.5 L250.5,94.5" stroke="#00ff00" stroke-width="1" fill="none" shape-rendering="crispEdges"/><line x1="343" y1="100.5" x2="309" y2="121" stroke="#00ff00" stroke-width="1"/><path d="M341.5,90.5 L341.5,95.5 L339.5,95.5 M343.5,91.5 L344.5,90.5 L346.5,90.5 L347.5,91.5 L347.5,92.5 L343.5,95.5 L347.5,95.5" stroke="#00ff00" stroke-width="1" fill="none" shape-rendering="crispEdges"/><line x1="367" y1="100.5" x2="323" y2="184" stroke="#00ff00" stroke-width="1"/><path d="M365.5,91.5 L365.5,96.5 L363.5,96.5 M367.5,91.5 L367.5,91.5 L371.5,91.5 L371.5,91.5 L371.5,93.5 L371.5,93.5 L369.5,93.5 M371.5,93.5 L371.5,94.5 L371.5,96.5 L371.5,96.5 L367.5,96.5 L367.5,96.5" stroke="#00ff00" stroke-width="1" fill="none" shape-rendering="crispEdges"/><line x1="391.5" y1="100.5" x2="357" y2="141" stroke="#00ff00" stroke-width="1"/><path d="M389.5,89.5 L389.5,94.5 L387.5,94.5 M394.5,94.5 L394.5,89.5 L391.5,92.5 L395.5,92.5" stroke="#00ff00" stroke-width="1" fill="none" shape-rendering="crispEdges"/><line x1="470" y1="140" x2="398" y2="164.5" stroke="#00ff00" stroke-width="1"/><path d="M477.5,137.5 L477.5,142.5 L475.5,142.5 M483.5,137.5 L479.5,137.5 L479.5,139.5 L483.5,139.5 L483.5,139.5 L483.5,142.5 L483.5,142.5 L479.5,142.5" stroke="#00ff00" stroke-width="1" fill="none" shape-rendering="crispEdges"/><line x1="470" y1="163" x2="329" y2="206" stroke="#00ff00" stroke-width="1"/><path d="M477.5,158.5 L477.5,163.5 L475.5,163.5 M483.5,158.5 L480.5,158.5 L479.5,159.5 L479.5,163.5 L479.5,163.5 L483.5,163.5 L483.5,163.5 L483.5,160.5 L483.5,160.5 L479.5,160.5" stroke="#00ff00" stroke-width="1" fill="none" shape-rendering="crispEdges"/><line x1="470" y1="181" x2="333" y2="228" stroke="#00ff00" stroke-width="1"/><path d="M477.5,174.5 L477.5,179.5 L475.5,179.5 M479.5,174.5 L483.5,174.5 L481.5,179.5" stroke="#00ff00" stroke-width="1" fill="none" shape-rendering="crispEdges"/><line x1="470" y1="193" x2="333" y2="240" stroke="#00ff00" stroke-width="1"/><path d="M477.5,188.5 L477.5,193.5 L475.5,193.5 M479.5,188.5 L483.5,188.5 L483.5,188.5 L483.5,190.5 L483.5,190.5 L479.5,190.5 L479.5,190.5 L479.5,188.5 Z M479.5,190.5 L479.5,191.5 L479.5,193.5 L479.5,193.5 L483.5,193.5 L483.5,193.5 L483.5,191.5 L483.5,190.5" stroke="#00ff00" stroke-width="1" fill="none" shape-rendering="crispEdges"/><line x1="470" y1="212" x2="329" y2="268" stroke="#00ff00" stroke-width="1"/><path d="M477.5,208.5 L477.5,213.5 L475.5,213.5 M483.5,210.5 L479.5,210.5 L479.5,210.5 L479.5,208.5 L479.5,208.5 L483.5,208.5 L483.5,208.5 L483.5,213.5 L483.5,213.5 L479.5,213.5" stroke="#00ff00" stroke-width="1" fill="none" shape-rendering="crispEdges"/><line x1="470" y1="233" x2="333" y2="278" stroke="#00ff00" stroke-width="1"/><path d="M475.5,230.5 L476.5,229.5 L478.5,229.5 L479.5,230.5 L479.5,231.5 L475.5,234.5 L479.5,234.5 M480.5,229.5 L484.5,229.5 L484.5,229.5 L484.5,234.5 L484.5,234.5 L480.5,234.5 L480.5,234.5 L480.5,229.5 Z" stroke="#00ff00" stroke-width="1" fill="none" shape-rendering="crispEdges"/><line x1="470" y1="251" x2="327" y2="297" stroke="#00ff00" stroke-width="1"/><path d="M475.5,249.5 L476.5,248.5 L478.5,248.5 L479.5,249.5 L479.5,250.5 L475.5,253.5 L479.5,253.5 M482.5,248.5 L482.5,253.5 L480.5,253.5" stroke="#00ff00" stroke-width="1" fill="none" shape-rendering="crispEdges"/><line x1="470" y1="288.5" x2="390" y2="317" stroke="#00ff00" stroke-width="1"/><path d="M470.5,286.5 L471.5,285.5 L473.5,285.5 L474.5,286.5 L474.5,287.5 L470.5,290.5 L474.5,290.5 M475.5,286.5 L476.5,285.5 L478.5,285.5 L479.5,286.5 L479.5,287.5 L475.5,290.5 L479.5,290.5" stroke="#00ff00" stroke-width="1" fill="none" shape-rendering="crispEdges"/><line x1="217" y1="389" x2="209" y2="357" stroke="#00ff00" stroke-width="1"/><path d="M211.5,392.5 L212.5,391.5 L214.5,391.5 L215.5,392.5 L215.5,393.5 L211.5,396.5 L215.5,396.5 M220.5,391.5 L217.5,391.5 L216.5,392.5 L216.5,396.5 L216.5,396.5 L220.5,396.5 L220.5,396.5 L220.5,393.5 L220.5,393.5 L216.5,393.5" stroke="#00ff00" stroke-width="1" fill="none" shape-rendering="crispEdges"/><line x1="243.5" y1="389" x2="256.5" y2="350" stroke="#00ff00" stroke-width="1"/><path d="M238.5,392.5 L239.5,391.5 L241.5,391.5 L242.5,392.5 L242.5,393.5 L238.5,396.5 L242.5,396.5 M247.5,391.5 L243.5,391.5 L243.5,393.5 L247.5,393.5 L247.5,393.5 L247.5,396.5 L247.5,396.5 L243.5,396.5" stroke="#00ff00" stroke-width="1" fill="none" shape-rendering="crispEdges"/><line x1="264" y1="389" x2="262.5" y2="334" stroke="#00ff00" stroke-width="1"/><path d="M256.5,392.5 L257.5,391.5 L259.5,391.5 L260.5,392.5 L260.5,393.5 L256.5,396.5 L260.5,396.5 M264.5,396.5 L264.5,391.5 L261.5,394.5 L265.5,394.5" stroke="#00ff00" stroke-width="1" fill="none" shape-rendering="crispEdges"/><line x1="282.5" y1="389" x2="276.5" y2="361" stroke="#00ff00" stroke-width="1"/><path d="M277.5,392.5 L278.5,391.5 L280.5,391.5 L281.5,392.5 L281.5,393.5 L277.5,396.5 L281.5,396.5 M282.5,391.5 L282.5,391.5 L286.5,391.5 L286.5,391.5 L286.5,393.5 L286.5,393.5 L284.5,393.5 M286.5,393.5 L286.5,394.5 L286.5,396.5 L286.5,396.5 L282.5,396.5 L282.5,396.5" stroke="#00ff00" stroke-width="1" fill="none" shape-rendering="crispEdges"/><line x1="315" y1="83.5" x2="516" y2="83.5" stroke="#ff00ff" stroke-width="1"/><line x1="443" y1="366.5" x2="516" y2="366.5" stroke="#ff00ff" stroke-width="1"/><line x1="514.5" y1="84" x2="514.5" y2="366" stroke="#00ffff" stroke-width="1"/><path d="M508.5,232.5 L515.5,232.5 L515.5,234.5 M508.5,227.5 L508.5,224.5 L509.5,223.5 L511.5,223.5 L512.5,224.5 L512.5,227.5 L511.5,228.5 L509.5,228.5 Z M512.5,227.5 L512.5,228.5 L514.5,228.5 L515.5,227.5 L515.5,224.5 L514.5,223.5 L512.5,223.5 L512.5,224.5 M515.5,217.5 L508.5,217.5 L513.5,221.5 L513.5,216.5" stroke="#ff00ff" stroke-width="1" fill="none" shape-rendering="crispEdges"/><g shape-rendering="crispEdges"><line x1="177" y1="433.5" x2="400" y2="433.5" stroke="#ffffff" stroke-width="1"/><line x1="140.5" y1="477" x2="140.5" y2="659" stroke="#ffffff" stroke-width="1"/><line x1="442.5" y1="477" x2="442.5" y2="649" stroke="#ffffff" stroke-width="1"/><line x1="168" y1="691.5" x2="400" y2="691.5" stroke="#ffffff" stroke-width="1"/><line x1="183" y1="510.5" x2="292" y2="510.5" stroke="#ffffff" stroke-width="1"/><line x1="183.5" y1="511" x2="183.5" y2="684" stroke="#ffffff" stroke-width="1"/><line x1="183" y1="683.5" x2="292" y2="683.5" stroke="#ffffff" stroke-width="1"/><line x1="231.5" y1="511" x2="231.5" y2="684" stroke="#ffffff" stroke-width="1"/><line x1="248.5" y1="511" x2="248.5" y2="684" stroke="#ffffff" stroke-width="1"/><line x1="175.5" y1="559" x2="175.5" y2="691" stroke="#ffffff" stroke-width="1"/><line x1="140" y1="545.5" x2="162" y2="545.5" stroke="#ffffff" stroke-width="1"/></g><path d="M140.70,476.30 A42.8,42.8 0 0 1 183.50,433.50" stroke="#ffffff" stroke-width="1" fill="none"/><path d="M399.50,433.50 A42.8,42.8 0 0 1 442.30,476.30" stroke="#ffffff" stroke-width="1" fill="none"/><path d="M183.50,433.50 A42.8,42.8 0 0 1 211.01,443.51" stroke="#ffffff" stroke-width="1" fill="none"/><path d="M371.99,443.51 A42.8,42.8 0 0 1 399.50,433.50" stroke="#ffffff" stroke-width="1" fill="none"/><path d="M211.0,443.5 A67.5,67.5 0 0 0 254.4,459.5 H328.6 A67.5,67.5 0 0 0 372,443.5" stroke="#ffffff" stroke-width="1" fill="none"/><path d="M165.41,515.09 A42.8,42.8 0 0 1 140.70,476.30" stroke="#ffffff" stroke-width="1" fill="none"/><path d="M165.4,515.1 A29,29 0 0 1 183,543" stroke="#ffffff" stroke-width="1" fill="none"/><path d="M140.5,658 C141,676 151,690 168,691.5" stroke="#ffffff" stroke-width="1" fill="none"/><path d="M442.5,662 C442,678 432,690 415,691.5" stroke="#ffffff" stroke-width="1" fill="none"/><path d="M162,545.5 C170,546 175,551 175.5,559" stroke="#ffffff" stroke-width="1" fill="none"/><circle cx="183.5" cy="476.3" r="18.6" stroke="#ffffff" stroke-width="1" fill="none"/><circle cx="399.5" cy="476.3" r="24.2" stroke="#ffffff" stroke-width="1" fill="none"/><circle cx="399.5" cy="476.3" r="19.5" stroke="#ffffff" stroke-width="1" fill="none"/><line x1="292" y1="510.5" x2="400" y2="510.5" stroke="#ffff00" stroke-width="1" stroke-dasharray="13 6"/><line x1="227.5" y1="511" x2="227.5" y2="683" stroke="#ffff00" stroke-width="1" stroke-dasharray="13 6"/><line x1="335" y1="511" x2="335" y2="683" stroke="#ffff00" stroke-width="1" stroke-dasharray="13 6"/><line x1="351.5" y1="511" x2="351.5" y2="683" stroke="#ffff00" stroke-width="1" stroke-dasharray="13 6"/><line x1="355.5" y1="511" x2="355.5" y2="683" stroke="#ffff00" stroke-width="1" stroke-dasharray="13 6"/><line x1="335" y1="510.5" x2="356" y2="510.5" stroke="#ffff00" stroke-width="1"/><line x1="335" y1="683.5" x2="356" y2="683.5" stroke="#ffff00" stroke-width="1"/><line x1="292" y1="683.5" x2="400" y2="683.5" stroke="#ffff00" stroke-width="1" stroke-dasharray="13 6"/><line x1="399.5" y1="511" x2="399.5" y2="691" stroke="#ffff00" stroke-width="1" stroke-dasharray="13 6"/><line x1="408.5" y1="557" x2="408.5" y2="691" stroke="#ffff00" stroke-width="1" stroke-dasharray="13 6"/><path d="M408.5,557 C409,550 414,545.7 421,545.7 H442" stroke="#ffff00" stroke-width="1" fill="none"/><path d="M441.5,490 C436,505 428,512 418,518 C412,521 409,523 407,526" stroke="#ffff00" stroke-width="1" fill="none" stroke-dasharray="9 4"/><path d="M404.5,532 C402,537 400.5,540 400,544" stroke="#ffff00" stroke-width="1" fill="none"/><path d="M291.40,534.00 A63.3,63.3 0 0 1 291.40,660.60" stroke="#ffffff" stroke-width="1" fill="none"/><path d="M291.40,531.70 A65.6,65.6 0 0 1 291.40,662.90" stroke="#ffffff" stroke-width="1" fill="none"/><circle cx="291.4" cy="597.3" r="26.3" stroke="#ffffff" stroke-width="1" fill="none"/><circle cx="291.4" cy="597.3" r="24.0" stroke="#ffffff" stroke-width="1" fill="none"/><path d="M275.09,589.69 A18,18 0 1 1 275.09,604.91" stroke="#ffffff" stroke-width="1" fill="none"/><circle cx="291.4" cy="597.3" r="9.3" stroke="#ffffff" stroke-width="1" fill="none"/><path d="M289.84,606.16 A9.0,9.0 0 0 1 289.84,588.44" stroke="#ffff00" stroke-width="1.5" fill="none"/><circle cx="274.8" cy="597.3" r="4.5" stroke="#00ff00" stroke-width="1" fill="none"/><circle cx="274.8" cy="597.3" r="5.5" stroke="#ffff00" stroke-width="1" fill="none"/><circle cx="208.4" cy="532.4" r="8.2" stroke="#ffffff" stroke-width="1" fill="none"/><path d="M205.53,524.51 A8.4,8.4 0 0 1 216.29,535.27" stroke="#00ff00" stroke-width="1.2" fill="none"/><circle cx="208.4" cy="661.4" r="8.2" stroke="#ffffff" stroke-width="1" fill="none"/><path d="M205.53,653.51 A8.4,8.4 0 0 1 216.29,664.27" stroke="#00ff00" stroke-width="1.2" fill="none"/><circle cx="208.4" cy="576.6" r="8.6" stroke="#ffffff" stroke-width="1" fill="none"/><circle cx="208.4" cy="576.6" r="4.6" stroke="#ffffff" stroke-width="1" fill="none"/><circle cx="208.4" cy="617.4" r="8.6" stroke="#ffffff" stroke-width="1" fill="none"/><circle cx="208.4" cy="617.4" r="4.6" stroke="#ffffff" stroke-width="1" fill="none"/><circle cx="263.3" cy="548.3" r="5.0" stroke="#ffffff" stroke-width="1" fill="none"/><path d="M258.41,546.52 A5.2,5.2 0 1 1 265.90,552.80" stroke="#00ff00" stroke-width="1.3" fill="none"/><circle cx="263.3" cy="646.1" r="5.0" stroke="#ffffff" stroke-width="1" fill="none"/><path d="M258.41,644.32 A5.2,5.2 0 1 1 265.90,650.60" stroke="#00ff00" stroke-width="1.3" fill="none"/><circle cx="263.3" cy="561.6" r="5.5" stroke="#ffffff" stroke-width="1" fill="none"/><circle cx="263.3" cy="561.6" r="3.8" stroke="#ffffff" stroke-width="1" fill="none"/><circle cx="319.8" cy="524.4" r="6.6" stroke="#ffffff" stroke-width="1" fill="none"/><circle cx="319.8" cy="524.4" r="4.8" stroke="#ffffff" stroke-width="1" fill="none"/><circle cx="319.8" cy="669.5" r="6.6" stroke="#ffffff" stroke-width="1" fill="none"/><circle cx="319.8" cy="669.5" r="4.8" stroke="#ffffff" stroke-width="1" fill="none"/><circle cx="377.8" cy="560.5" r="8.3" stroke="#ffffff" stroke-width="1" fill="none"/><circle cx="377.8" cy="560.5" r="6.8" stroke="#ffffff" stroke-width="1" fill="none"/><circle cx="313.7" cy="558.4" r="7.6" stroke="#ffffff" stroke-width="2.2" fill="none"/><circle cx="313.7" cy="635.3" r="7.6" stroke="#ffffff" stroke-width="2.2" fill="none"/><circle cx="377.8" cy="532.3" r="7.6" stroke="#ffffff" stroke-width="2.2" fill="none"/><circle cx="377.8" cy="661.3" r="7.6" stroke="#ffffff" stroke-width="2.2" fill="none"/><circle cx="320.5" cy="632.3" r="4.5" stroke="#ffff00" stroke-width="1" fill="none"/><circle cx="320.5" cy="632.3" r="3" stroke="#ffff00" stroke-width="1" fill="none"/><g shape-rendering="crispEdges"><line x1="131" y1="476.5" x2="170" y2="476.5" stroke="#ff0000" stroke-width="1"/><line x1="184" y1="476.5" x2="222" y2="476.5" stroke="#ff0000" stroke-width="1"/><line x1="183.5" y1="421" x2="183.5" y2="466" stroke="#ff0000" stroke-width="1"/><line x1="183.5" y1="484" x2="183.5" y2="511" stroke="#ff0000" stroke-width="1"/><line x1="362" y1="476.5" x2="403" y2="476.5" stroke="#ff0000" stroke-width="1"/><line x1="413" y1="476.5" x2="455" y2="476.5" stroke="#ff0000" stroke-width="1"/><line x1="399.5" y1="421" x2="399.5" y2="466" stroke="#ff0000" stroke-width="1"/><line x1="399.5" y1="482" x2="399.5" y2="510" stroke="#ff0000" stroke-width="1"/><line x1="116" y1="597.5" x2="158" y2="597.5" stroke="#ff0000" stroke-width="1"/><line x1="168" y1="597.5" x2="209" y2="597.5" stroke="#ff0000" stroke-width="1"/><line x1="220" y1="597.5" x2="261" y2="597.5" stroke="#ff0000" stroke-width="1"/><line x1="266" y1="597.5" x2="314" y2="597.5" stroke="#ff0000" stroke-width="1"/><line x1="335" y1="597.5" x2="364" y2="597.5" stroke="#ff0000" stroke-width="1"/><line x1="375" y1="597.5" x2="416" y2="597.5" stroke="#ff0000" stroke-width="1"/><line x1="426" y1="597.5" x2="468" y2="597.5" stroke="#ff0000" stroke-width="1"/><line x1="291.5" y1="411" x2="291.5" y2="452" stroke="#ff0000" stroke-width="1"/><line x1="291.5" y1="462" x2="291.5" y2="503" stroke="#ff0000" stroke-width="1"/><line x1="291.5" y1="513" x2="291.5" y2="564" stroke="#ff0000" stroke-width="1"/><line x1="291.5" y1="566" x2="291.5" y2="608" stroke="#ff0000" stroke-width="1"/><line x1="291.5" y1="617" x2="291.5" y2="657" stroke="#ff0000" stroke-width="1"/><line x1="291.5" y1="668" x2="291.5" y2="702" stroke="#ff0000" stroke-width="1"/></g><line x1="196.4" y1="532.4" x2="220.4" y2="532.4" stroke="#ff0000" stroke-width="1"/><line x1="208.4" y1="521.4" x2="208.4" y2="543.4" stroke="#ff0000" stroke-width="1"/><line x1="196.4" y1="576.6" x2="220.4" y2="576.6" stroke="#ff0000" stroke-width="1"/><line x1="208.4" y1="565.6" x2="208.4" y2="587.6" stroke="#ff0000" stroke-width="1"/><line x1="196.4" y1="617.4" x2="220.4" y2="617.4" stroke="#ff0000" stroke-width="1"/><line x1="208.4" y1="606.4" x2="208.4" y2="628.4" stroke="#ff0000" stroke-width="1"/><line x1="196.4" y1="661.4" x2="220.4" y2="661.4" stroke="#ff0000" stroke-width="1"/><line x1="208.4" y1="650.4" x2="208.4" y2="672.4" stroke="#ff0000" stroke-width="1"/><line x1="256.3" y1="548.3" x2="270.3" y2="548.3" stroke="#ff0000" stroke-width="1"/><line x1="263.3" y1="541.3" x2="263.3" y2="555.3" stroke="#ff0000" stroke-width="1"/><line x1="256.3" y1="646.1" x2="270.3" y2="646.1" stroke="#ff0000" stroke-width="1"/><line x1="263.3" y1="639.1" x2="263.3" y2="653.1" stroke="#ff0000" stroke-width="1"/><line x1="312.8" y1="524.4" x2="326.8" y2="524.4" stroke="#ff0000" stroke-width="1"/><line x1="319.8" y1="517.4" x2="319.8" y2="531.4" stroke="#ff0000" stroke-width="1"/><line x1="312.8" y1="669.5" x2="326.8" y2="669.5" stroke="#ff0000" stroke-width="1"/><line x1="319.8" y1="662.5" x2="319.8" y2="676.5" stroke="#ff0000" stroke-width="1"/><line x1="301.7" y1="558.4" x2="325.7" y2="558.4" stroke="#ff0000" stroke-width="1"/><line x1="313.7" y1="545.4" x2="313.7" y2="571.4" stroke="#ff0000" stroke-width="1"/><line x1="303.7" y1="635.3" x2="323.7" y2="635.3" stroke="#ff0000" stroke-width="1"/><line x1="313.7" y1="624.3" x2="313.7" y2="646.3" stroke="#ff0000" stroke-width="1"/><line x1="377.8" y1="532.3" x2="377.8" y2="532.3" stroke="#ff0000" stroke-width="1"/><line x1="377.8" y1="523.3" x2="377.8" y2="541.3" stroke="#ff0000" stroke-width="1"/><line x1="364.8" y1="560.5" x2="390.8" y2="560.5" stroke="#ff0000" stroke-width="1"/><line x1="377.8" y1="560.5" x2="377.8" y2="560.5" stroke="#ff0000" stroke-width="1"/><line x1="308.6" y1="597.3" x2="308.6" y2="597.3" stroke="#ff0000" stroke-width="1"/><line x1="308.6" y1="590.3" x2="308.6" y2="604.3" stroke="#ff0000" stroke-width="1"/><line x1="274.8" y1="597.3" x2="274.8" y2="597.3" stroke="#ff0000" stroke-width="1"/><line x1="274.8" y1="591.3" x2="274.8" y2="603.3" stroke="#ff0000" stroke-width="1"/><line x1="313.5" y1="632.3" x2="327.5" y2="632.3" stroke="#ff0000" stroke-width="1"/><line x1="320.5" y1="625.3" x2="320.5" y2="639.3" stroke="#ff0000" stroke-width="1"/><line x1="352" y1="532.3" x2="400" y2="532.3" stroke="#ff0000" stroke-width="1"/><line x1="377.8" y1="505" x2="377.8" y2="541" stroke="#ff0000" stroke-width="1"/><line x1="377.8" y1="544" x2="377.8" y2="574" stroke="#ff0000" stroke-width="1"/><line x1="351" y1="661.3" x2="400" y2="661.3" stroke="#ff0000" stroke-width="1"/><line x1="377.8" y1="640" x2="377.8" y2="690" stroke="#ff0000" stroke-width="1"/><line x1="313.7" y1="625" x2="313.7" y2="648" stroke="#ff0000" stroke-width="1"/><g shape-rendering="crispEdges"><line x1="241" y1="576.5" x2="247" y2="576.5" stroke="#ffffff" stroke-width="1"/><line x1="247.5" y1="576" x2="247.5" y2="583" stroke="#ffffff" stroke-width="1"/><line x1="327" y1="597.5" x2="335" y2="597.5" stroke="#ffffff" stroke-width="1"/><line x1="335.5" y1="591" x2="335.5" y2="597" stroke="#ffffff" stroke-width="1"/><line x1="177" y1="476.5" x2="183" y2="476.5" stroke="#ffffff" stroke-width="1"/><line x1="183.5" y1="476" x2="183.5" y2="483" stroke="#ffffff" stroke-width="1"/></g><g shape-rendering="crispEdges"><line x1="400" y1="433.5" x2="516" y2="433.5" stroke="#ff00ff" stroke-width="1"/><line x1="400" y1="690.5" x2="516" y2="690.5" stroke="#ff00ff" stroke-width="1"/><line x1="513.5" y1="434" x2="513.5" y2="690" stroke="#00ffff" stroke-width="1"/><line x1="140.5" y1="658" x2="140.5" y2="722" stroke="#ff00ff" stroke-width="1"/><line x1="442.5" y1="658" x2="442.5" y2="722" stroke="#ff00ff" stroke-width="1"/><line x1="141" y1="720.5" x2="442" y2="720.5" stroke="#00ffff" stroke-width="1"/></g><path d="M286.5,712.5 L286.5,719.5 L284.5,719.5 M290.5,712.5 L295.5,712.5 L292.5,719.5 M302.5,712.5 L297.5,712.5 L297.5,715.5 L301.5,715.5 L302.5,716.5 L302.5,718.5 L301.5,719.5 L297.5,719.5" stroke="#ff00ff" stroke-width="1" fill="none" shape-rendering="crispEdges"/><path d="M506.5,569.5 L513.5,569.5 L513.5,571.5 M506.5,560.5 L506.5,565.5 L509.5,565.5 L509.5,561.5 L510.5,560.5 L512.5,560.5 L513.5,561.5 L513.5,565.5 M506.5,557.5 L506.5,554.5 L507.5,553.5 L512.5,553.5 L513.5,554.5 L513.5,557.5 L512.5,558.5 L507.5,558.5 Z" stroke="#ff00ff" stroke-width="1" fill="none" shape-rendering="crispEdges"/><path d="M115.5,479.5 L115.5,476.5 L117.5,472.5 L119.5,472.5 L121.5,476.5 L121.5,479.5 M115.5,477.5 L121.5,477.5" stroke="#ffffff" stroke-width="1" fill="none" shape-rendering="crispEdges"/><line x1="124" y1="476.5" x2="131" y2="476.5" stroke="#ffffff" stroke-width="1"/><line x1="450" y1="560.5" x2="456" y2="560.5" stroke="#ffffff" stroke-width="1"/><path d="M459.5,563.5 L459.5,560.5 L461.5,556.5 L463.5,556.5 L465.5,560.5 L465.5,563.5 M459.5,561.5 L465.5,561.5" stroke="#ffffff" stroke-width="1" fill="none" shape-rendering="crispEdges"/></svg>
</body></html>
